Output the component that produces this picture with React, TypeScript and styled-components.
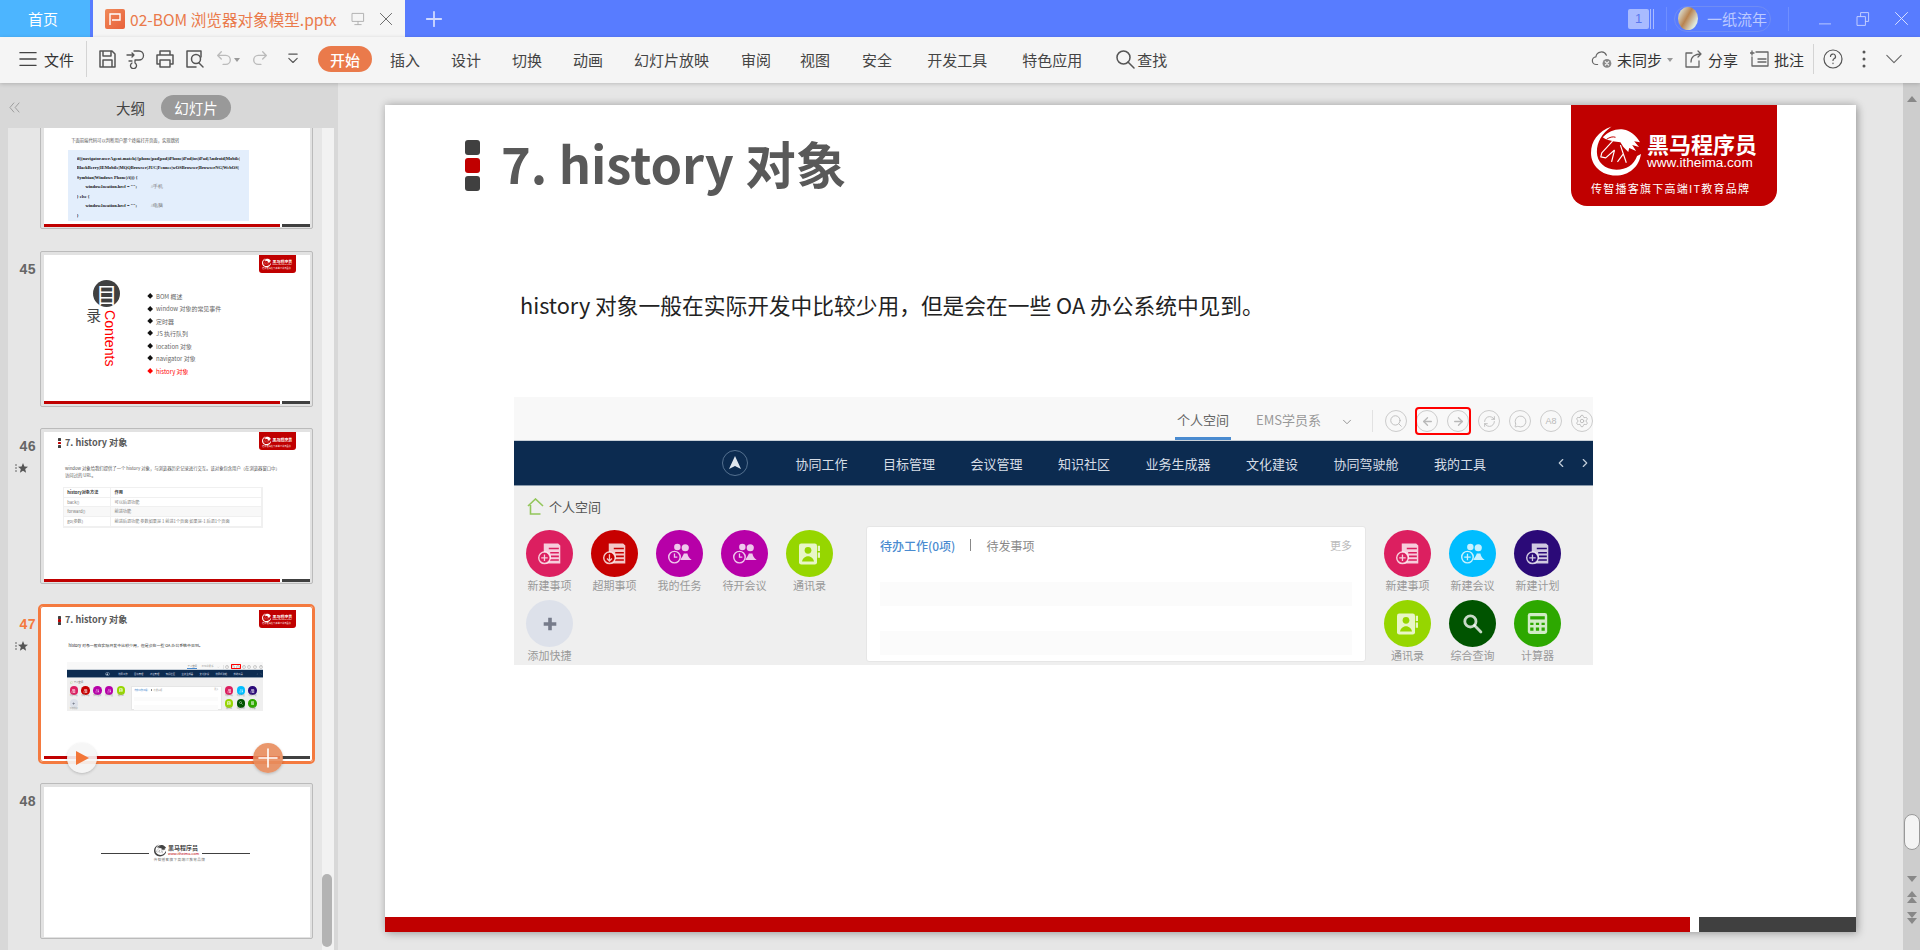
import React from 'react';
import styled, { createGlobalStyle } from 'styled-components';
import { ArrowLeft, ArrowRight, ChevronDown, ChevronLeft, ChevronRight, MessageCircle, RefreshCw, Search, Settings } from 'lucide-react';

const CJK = '"Noto Sans CJK SC", "Noto Sans", sans-serif';

const GlobalStyle = createGlobalStyle`
  html, body { margin: 0; padding: 0; background: #e6e6e6; overflow: hidden; }
  body { font-family: ${CJK}; }
  * { box-sizing: border-box; }
`;

const Page = styled.div`
  width: 1920px;
  height: 950px;
  display: flex;
  flex-direction: column;
  overflow: hidden;
`;

/* ---------- title bar ---------- */
const TitleBar = styled.div`
  height: 37px;
  flex: none;
  display: flex;
  align-items: stretch;
  background: #587cff;
  color: #fff;
`;
const HomeTab = styled.div`
  width: 90px;
  margin-right: 3px;
  background: #4cb5ff;
  display: flex;
  align-items: center;
  justify-content: center;
  font-size: 15px;
  padding-right: 4px;
`;
const DocTab = styled.div`
  width: 312px;
  background: #f5f5f5;
  display: flex;
  align-items: center;
  padding-left: 12px;
  color: #ea7a4b;
  font-size: 15.6px;
  white-space: nowrap;
`;
const DocIcon = styled.div`
  width: 20px;
  height: 20px;
  background: linear-gradient(135deg, #f08a5a, #e8603a);
  border-radius: 2px;
  margin-right: 5px;
  flex: none;
  display: flex;
  align-items: center;
  justify-content: center;
`;
const TabActions = styled.div`
  display: flex;
  align-items: center;
  gap: 12px;
  margin-left: 13px;
`;
const NewTab = styled.div`
  margin-left: 20px;
  display: flex;
  align-items: center;
`;
const TitleRight = styled.div`
  margin-left: auto;
  display: flex;
  align-items: center;
`;
const CountBadge = styled.div`
  width: 21px;
  height: 20px;
  background: #a9bbff;
  border-radius: 2px;
  color: #5a78ee;
  font: 13px "Liberation Sans", sans-serif;
  display: flex;
  align-items: center;
  justify-content: center;
`;
const CountLines = styled.div`
  width: 4px;
  height: 20px;
  margin-left: 1px;
  border-left: 1px solid #a9bbff;
  border-right: 1px solid #a9bbff;
`;
const TitleSep = styled.div<{ $left: number; $right: number }>`
  width: 1px;
  height: 24px;
  background: #6f8fff;
  margin: 0 ${(p) => p.$right}px 0 ${(p) => p.$left}px;
`;
const UserPill = styled.div`
  width: 97px;
  height: 26px;
  border: 1px solid #6f8cf5;
  border-radius: 13px;
  display: flex;
  align-items: center;
  padding-left: 3px;
  color: #bcc9ff;
  font-size: 15px;
  white-space: nowrap;
`;
const Avatar = styled.div`
  width: 20px;
  height: 23px;
  border-radius: 50%;
  background: linear-gradient(120deg, #d8d6c4 15%, #b8834f 45%, #dfe7dc 80%);
  margin-right: 9px;
  flex: none;
`;
const WinButtons = styled.div`
  display: flex;
  align-items: center;
  gap: 23px;
  margin: 0 11px 0 29px;
`;

/* ---------- ribbon toolbar ---------- */
const Toolbar = styled.div`
  height: 46px;
  flex: none;
  display: flex;
  align-items: center;
  padding-bottom: 2px;
  background: #f5f5f5;
  color: #444;
  font-size: 15px;
  position: relative;
  z-index: 2;
  box-shadow: 0 1px 4px rgba(0, 0, 0, 0.18);
  white-space: nowrap;
`;
const FileMenu = styled.div`
  display: flex;
  align-items: center;
  gap: 7px;
  margin-left: 19px;
  color: #333;
  width: 67px;
`;
const ToolSep = styled.div`
  width: 1px;
  height: 36px;
  background: #d4d4d4;
`;
const QuickIcons = styled.div`
  display: flex;
  align-items: center;
  margin-left: 10px;
  width: 221px;
`;
const QuickIcon = styled.span<{ $w: number }>`
  width: ${(p) => p.$w}px;
  flex: none;
  display: flex;
  align-items: center;
`;
const StartPill = styled.div`
  width: 54px;
  height: 26px;
  border-radius: 13px;
  background: #ea7a4b;
  color: #fff;
  display: flex;
  align-items: center;
  justify-content: center;
  font-weight: 500;
`;
const RibbonTab = styled.div<{ $gap?: number }>`
  margin-left: ${(p) => p.$gap ?? 31}px;
  display: flex;
  align-items: center;
  gap: 2px;
`;
const ToolRight = styled.div`
  margin-left: auto;
  display: flex;
  align-items: center;
  color: #333;
  padding-right: 17px;
`;
const ToolAction = styled.div<{ $gap?: number }>`
  display: flex;
  align-items: center;
  gap: 4px;
  margin-left: ${(p) => p.$gap ?? 0}px;
`;
const MiniCaret = styled.span`
  width: 0;
  height: 0;
  border: 3.5px solid transparent;
  border-top: 4px solid #999;
  margin: 4px 0 0 1px;
`;
const HelpSep = styled(ToolSep)`
  height: 30px;
  margin: 0 9px;
`;

/* ---------- workspace ---------- */
const Workspace = styled.div`
  flex: 1;
  display: flex;
  min-height: 0;
`;
const Sidebar = styled.div`
  width: 338px;
  flex: none;
  background: #d8d8d8;
  display: flex;
  flex-direction: column;
`;
const SideHeader = styled.div`
  height: 45px;
  flex: none;
  display: flex;
  align-items: center;
  padding: 4px 0 0 8px;
  color: #444;
  font-size: 14.5px;
`;
const OutlineTab = styled.span`
  margin-left: 95px;
`;
const SlidesPill = styled.span`
  width: 70px;
  height: 25px;
  margin-left: 16px;
  border-radius: 13px;
  background: #999;
  color: #fff;
  display: flex;
  align-items: center;
  justify-content: center;
`;
const SideBody = styled.div`
  flex: 1;
  display: flex;
  min-height: 0;
  margin: 0 4px 0 8px;
`;
const ThumbList = styled.div`
  flex: 1;
  background: #e6e6e6;
  overflow: hidden;
  display: flex;
  flex-direction: column;
  gap: 21.5px;
`;
const SideTrack = styled.div`
  width: 12px;
  flex: none;
  background: #f2f2f2;
  display: flex;
  flex-direction: column;
  justify-content: flex-end;
`;
const SideThumb = styled.div`
  width: 10px;
  height: 73px;
  margin-bottom: 3px;
  border-radius: 5px;
  background: #b3b3b3;
`;
const ThumbRow = styled.div<{ $first?: boolean }>`
  display: flex;
  flex: none;
  margin-top: ${(p) => (p.$first ? '-55px' : '0')};
`;
const ThumbMeta = styled.div`
  width: 32px;
  flex: none;
  display: flex;
  flex-direction: column;
  align-items: flex-end;
  padding: 11px 4px 0 0;
  gap: 8px;
`;
const ThumbNo = styled.div<{ $active?: boolean }>`
  font: bold 14px/16px "Liberation Mono", monospace;
  color: ${(p) => (p.$active ? '#f47a3f' : '#666')};
`;
const StarMark = styled.svg`
  align-self: flex-start;
  margin-left: 7px;
`;
const ThumbFrame = styled.div<{ $active?: boolean }>`
  width: 273px;
  height: 156px;
  flex: none;
  position: relative;
  padding: 3px 2px 1px 3px;
  background: #e2e2e2;
  border: 1px solid ${(p) => (p.$active ? '#f47a3f' : '#bbb')};
  border-radius: 2px;
  outline: ${(p) => (p.$active ? '2px solid #f47a3f' : 'none')};
  ${(p) => (p.$active ? 'background: #fff; border-radius: 3px;' : '')}
`;
const ThumbZoom = styled.div`
  zoom: 0.181;
`;
const RoundOverlay = styled.div<{ $side: 'left' | 'right' }>`
  position: absolute;
  bottom: -12px;
  ${(p) => (p.$side === 'left' ? 'left: 26px;' : 'right: 29px;')}
  width: 30px;
  height: 30px;
  border-radius: 50%;
  background: ${(p) => (p.$side === 'left' ? 'rgba(245, 245, 245, 0.9)' : 'rgba(232, 140, 92, 0.9)')};
  box-shadow: 0 1px 3px rgba(0, 0, 0, 0.2);
  display: flex;
  align-items: center;
  justify-content: center;
`;

const Stage = styled.div`
  flex: 1;
  background: #e6e6e6;
  padding: 22px 47px 0;
  min-width: 0;
`;
const VScroll = styled.div`
  width: 17px;
  flex: none;
  background: #cdcdcd;
  display: flex;
  flex-direction: column;
  align-items: center;
`;
const Tri = styled.span<{ $dir: 'up' | 'down'; $top: number }>`
  width: 0;
  height: 0;
  flex: none;
  margin-top: ${(p) => p.$top}px;
  border-left: 5px solid transparent;
  border-right: 5px solid transparent;
  ${(p) => (p.$dir === 'up' ? 'border-bottom: 6px solid #888;' : 'border-top: 6px solid #888;')}
`;
const VThumb = styled.div`
  width: 16px;
  height: 36px;
  flex: none;
  margin-top: 712px;
  background: #f4f4f4;
  border: 1px solid #999;
  border-radius: 8px;
`;

/* ---------- slide ---------- */
const SlideSheet = styled.div<{ $shadow?: boolean }>`
  width: 1471px;
  height: 827px;
  background: #fff;
  position: relative;
  display: flex;
  flex-direction: column;
  ${(p) => (p.$shadow ? 'box-shadow: 2px 2px 8px rgba(0, 0, 0, 0.25), 0 -2px 8px rgba(0, 0, 0, 0.12);' : '')}
`;
const SlideHead = styled.div`
  height: 96px;
  flex: none;
  display: flex;
  align-items: flex-start;
  padding: 35px 0 0 80px;
  gap: 21px;
`;
const Bullets = styled.div`
  display: flex;
  flex-direction: column;
  gap: 3px;
`;
const Bullet = styled.div<{ $red?: boolean }>`
  width: 15px;
  height: 15px;
  border-radius: 3px;
  background: ${(p) => (p.$red ? '#c00000' : '#404040')};
`;
const SlideTitle = styled.div`
  font-size: 50.5px;
  font-weight: 700;
  line-height: 50px;
  margin-top: -3px;
  color: #595959;
  white-space: nowrap;
`;
const SlideFoot = styled.div`
  margin-top: auto;
  height: 15px;
  flex: none;
  display: flex;
`;
const FootRed = styled.div`
  width: 1305px;
  background: #c00000;
`;
const FootDark = styled.div`
  width: 157px;
  margin-left: 9px;
  background: #404040;
`;
const Brand = styled.div`
  position: absolute;
  top: 0;
  left: 1186px;
  width: 206px;
  height: 101px;
  background: #c00000;
  border-radius: 0 0 16px 16px;
  color: #fff;
  padding: 20px 20px 0;
`;
const BrandTop = styled.div`
  display: flex;
  align-items: center;
  gap: 5px;
`;
const BrandName = styled.div`
  font-size: 22px;
  line-height: 24px;
  font-weight: 700;
  white-space: nowrap;
`;
const BrandUrl = styled.div`
  font: 13.6px/16px "Liberation Sans", sans-serif;
  white-space: nowrap;
`;
const BrandLine = styled.div`
  font-size: 11px;
  line-height: 14px;
  letter-spacing: 1.25px;
  margin-top: 4px;
  white-space: nowrap;
`;
const Lead = styled.div`
  margin: 83px 0 0 135px;
  height: 42px;
  font-size: 21.72px;
  line-height: 42px;
  color: #222;
  white-space: nowrap;
`;

/* ---------- screenshot inside the slide ---------- */
const Shot = styled.div`
  width: 1079px;
  height: 268px;
  margin: 71px 0 0 129px;
  background: #efefef;
  overflow: hidden;
  flex: none;
`;
const ShotTop = styled.div`
  height: 44px;
  background: #f8f8f8;
  display: flex;
  justify-content: flex-end;
  font-size: 13px;
  color: #666;
  border-bottom: 1px solid #c8d0d8;
`;
const ShotTab = styled.div<{ $on?: boolean }>`
  display: flex;
  align-items: center;
  padding: ${(p) => (p.$on ? '0 2px' : '0')};
  color: ${(p) => (p.$on ? '#666' : '#999')};
  margin-right: ${(p) => (p.$on ? 25 : 19)}px;
  padding-top: 4px;
  border-bottom: 3px solid ${(p) => (p.$on ? '#4a8bd0' : 'transparent')};
  white-space: nowrap;
`;
const ShotChevron = styled.div`
  display: flex;
  padding-top: 18px;
`;
const ShotDivider = styled.div`
  width: 1px;
  height: 22px;
  background: #e2e2e2;
  margin: 13px 12px 0 18px;
`;
const RoundRow = styled.div`
  display: flex;
  gap: 9px;
  padding-top: 13px;
`;
const RoundBtn = styled.div`
  width: 22px;
  height: 22px;
  border: 1px solid #ccc;
  border-radius: 50%;
  flex: none;
  display: flex;
  align-items: center;
  justify-content: center;
  color: #b8b8b8;
  font: 9px "Liberation Sans", sans-serif;
`;
const RedGroup = styled.div`
  display: flex;
  gap: 9px;
  position: relative;
  height: 22px;
  &::after {
    content: '';
    position: absolute;
    inset: -3px -2px -3px -1px;
    border: 2px solid #f00;
    border-radius: 4px;
  }
`;
const ShotNav = styled.div`
  height: 45px;
  background: #0c2b50;
  border-bottom: 1px solid #8a9aab;
  display: flex;
  align-items: center;
  padding-left: 208px;
  font-size: 13px;
  color: #d6dde6;
  gap: 35.5px;
  white-space: nowrap;
`;
const NavMark = styled.div`
  width: 26px;
  height: 26px;
  margin-right: 12px;
  border: 1px solid #54708f;
  border-radius: 50%;
  display: flex;
  align-items: center;
  justify-content: center;
`;
const NavArrows = styled.div`
  margin-left: auto;
  display: flex;
  gap: 10px;
  margin-right: 1px;
  color: #c3cdd9;
`;
const ShotBody = styled.div`
  display: flex;
  height: 179px;
`;
const ShotLeft = styled.div`
  width: 352px;
  flex: none;
  padding: 12px 0 0 3px;
`;
const Crumb = styled.div`
  display: flex;
  align-items: center;
  gap: 5px;
  height: 17px;
  margin: 0 0 15px 10px;
  font-size: 13px;
  color: #555;
`;
const IconGrid = styled.div<{ $cols: number }>`
  display: grid;
  grid-template-columns: repeat(${(p) => p.$cols}, 65px);
  row-gap: 7px;
`;
const IconCell = styled.div`
  display: flex;
  flex-direction: column;
  align-items: center;
  font-size: 11px;
  line-height: 16px;
  color: #999;
  white-space: nowrap;
`;
const IconDisc = styled.div<{ $bg: string }>`
  width: 47px;
  height: 47px;
  border-radius: 50%;
  background: ${(p) => p.$bg};
  display: flex;
  align-items: center;
  justify-content: center;
`;
const TodoCard = styled.div`
  width: 500px;
  height: 136px;
  flex: none;
  margin-top: 40px;
  background: #fff;
  border-radius: 3px;
  border: 1px solid #e6e6e6;
  padding: 9px 13px 0;
`;
const TodoHead = styled.div`
  display: flex;
  align-items: center;
  height: 18px;
  font-size: 12px;
  color: #888;
`;
const TodoActive = styled.span`
  color: #4a8bd0;
  font-weight: 500;
`;
const TodoSep = styled.span`
  width: 1px;
  height: 12px;
  background: #888;
  margin: 0 15px;
`;
const TodoMore = styled.span`
  margin-left: auto;
  font-size: 11px;
  color: #bbb;
`;
const TodoRow = styled.div<{ $top: number }>`
  height: 24px;
  margin-top: ${(p) => p.$top}px;
  background: #fbfbfb;
`;
const ShotRight = styled.div`
  padding: 44px 0 0 9px;
`;

/* ---------- other thumbnails ---------- */
const SlideNote = styled.div`
  font-size: 24px;
  line-height: 40px;
  color: #555;
  white-space: nowrap;
`;
const NoteOffset = styled.div<{ $top: number; $left: number; $w?: number }>`
  margin: ${(p) => p.$top}px 0 0 ${(p) => p.$left}px;
  ${(p) => (p.$w ? `width: ${p.$w}px;` : '')}
`;
const CodeBlock = styled.div`
  margin: 36px 0 0 133px;
  width: 1000px;
  height: 392px;
  padding: 20px 48px;
  background: #e3eefc;
  font: bold 25px/52px "Liberation Serif", serif;
  color: #111;
`;
const CodeLine = styled.div<{ $indent?: boolean }>`
  padding-left: ${(p) => (p.$indent ? 48 : 0)}px;
  white-space: nowrap;
  overflow: hidden;
`;
const CodeNote = styled.span`
  font-weight: 400;
  color: #777;
  margin-left: 70px;
`;
const TableGrid = styled.div`
  margin: 40px 0 0 105px;
  width: 1105px;
  display: grid;
  grid-template-columns: 261px 1fr;
  border: 3px solid #f0f0f0;
  font-size: 23px;
  line-height: 49px;
  color: #777;
`;
const TableCell = styled.div<{ $head?: boolean; $shade?: boolean }>`
  padding-left: 18px;
  border-bottom: 3px solid #f0f0f0;
  border-right: 3px solid #f0f0f0;
  white-space: nowrap;
  ${(p) => (p.$head ? 'font-weight: 700; color: #333;' : '')}
  ${(p) => (p.$shade ? 'background: #f8f8f8;' : '')}
`;
const TocBody = styled.div`
  display: flex;
  padding: 141px 0 0 140px;
`;
const TocSide = styled.div`
  width: 344px;
  flex: none;
  display: flex;
  flex-direction: column;
  align-items: flex-end;
  padding-right: 62px;
`;
const TocDisc = styled.div`
  width: 150px;
  height: 150px;
  border-radius: 50%;
  background: #404040;
  color: #fff;
  font-size: 118px;
  line-height: 150px;
  text-align: center;
`;
const TocVertical = styled.div`
  display: flex;
  justify-content: flex-end;
  gap: 10px;
  margin-right: 16px;
  color: #333;
`;
const TocWord = styled.div`
  font-size: 82px;
  line-height: 90px;
  color: #444;
`;
const TocEn = styled.div`
  writing-mode: vertical-rl;
  font: 78px/80px "Liberation Sans", sans-serif;
  color: #f00;
  margin-top: 18px;
`;
const TocList = styled.div`
  display: flex;
  flex-direction: column;
  margin-left: 89px;
  padding-top: 55px;
`;
const TocItem = styled.div<{ $red?: boolean }>`
  height: 69px;
  display: flex;
  align-items: center;
  gap: 22px;
  font-size: 33px;
  color: ${(p) => (p.$red ? '#f00' : '#666')};
  white-space: nowrap;
  &::before {
    content: '';
    width: 24px;
    height: 24px;
    transform: rotate(45deg);
    background: ${(p) => (p.$red ? '#f00' : '#111')};
  }
`;
const EndRow = styled.div`
  display: flex;
  align-items: center;
  margin: 315px 0 0 315px;
`;
const EndRule = styled.div`
  width: 265px;
  height: 8px;
  background: #404040;
`;
const EndLogo = styled.div`
  width: 293px;
  flex: none;
  padding-left: 26px;
  color: #444;
`;
const EndTop = styled.div`
  display: flex;
  align-items: center;
  gap: 10px;
`;
const EndName = styled.div`
  font-size: 33px;
  line-height: 44px;
  font-weight: 700;
  white-space: nowrap;
`;
const EndUrl = styled.div`
  font: 22px/26px "Liberation Sans", sans-serif;
  color: #c00000;
  white-space: nowrap;
`;
const EndLine = styled.div`
  font-size: 20px;
  line-height: 34px;
  letter-spacing: 2px;
  color: #777;
  white-space: nowrap;
`;

/* ---------- small drawings ---------- */
const Stroke = ({ size = 20, color = '#555', sw = 1.5, children }: { size?: number; color?: string; sw?: number; children: React.ReactNode }) => (
  <svg width={size} height={size} viewBox="0 0 20 20" fill="none" stroke={color} strokeWidth={sw} strokeLinecap="round" strokeLinejoin="round">
    {children}
  </svg>
);

// ring, spiky mane and thin head lines of the brand logo
const HorseMark = ({ size = 52, color = '#fff', line = '#c00000' }: { size?: number; color?: string; line?: string }) => (
  <svg width={size} height={size} viewBox="0 0 52 52" fill="none">
    <path d="M21 1C7 6 0 16 0 28c0 13 11 23 25 23 14 0 24-9 26-22l-4 2c-3 9-11 14-21 14C14 45 6 37 6 27 6 17 11 8 21 1z" fill={color} />
    <path d="M12 12c6-6 13-9 21-8 7 1 13 6 17 13l-6-1 5 6-7-2 4 6-7-3-1 4-5-5-3-5-8-1c-3-1-6-1-10-4z" fill={color} />
    <path d="M22 16L11 28l-1 4 5 1 9-8M24 25l-3 12M30 20l3 9 3 9M33 29l-6 8" stroke={color} strokeWidth="1.2" strokeLinejoin="round" />
    <path d="M16 14c3-2 6-3 9-2" stroke={line} strokeWidth="1" />
  </svg>
);

const DiscGlyph = ({ kind, bg, sign = 'plus' }: { kind: string; bg: string; sign?: string }) => {
  const c = 'rgba(255,255,255,0.78)';
  if (kind === 'list') {
    return (
      <svg width="25" height="23" viewBox="0 0 34 32" fill="none">
        <path d="M9 2h20l3 3v25H13V14H9z" fill={c} />
        <path d="M16 9h14M18 15h12M19 20h11M17 25h13" stroke={bg} strokeWidth="2.2" />
        <circle cx="10" cy="22" r="8" fill={bg} stroke={c} strokeWidth="2" />
        {sign === 'down' ? <path d="M10 17v9M6.5 23l3.5 3.5 3.5-3.5" stroke={c} strokeWidth="1.8" /> : <path d="M10 17.5v9M5.5 22h9" stroke={c} strokeWidth="1.8" />}
      </svg>
    );
  }
  if (kind === 'people') {
    return (
      <svg width="25" height="23" viewBox="0 0 34 32" fill="none">
        <circle cx="14" cy="7" r="4.5" fill={c} />
        <circle cx="25" cy="8" r="5" fill={c} />
        <path d="M18 25c3-5 4-6 5-9h5c1 4 2 6 6 9z" fill={c} />
        <circle cx="10" cy="21" r="8" fill={bg} stroke={c} strokeWidth="2" />
        {sign === 'clock' ? <path d="M10 16v5h4" stroke={c} strokeWidth="1.8" /> : <path d="M10 16.5v9M5.5 21h9" stroke={c} strokeWidth="1.8" />}
      </svg>
    );
  }
  if (kind === 'contact') {
    return (
      <svg width="23" height="24" viewBox="0 0 30 32" fill="none">
        <rect x="1" y="2" width="24" height="28" rx="3" fill={c} />
        <rect x="26" y="5" width="3" height="7" fill={c} />
        <rect x="26" y="14" width="3" height="7" fill={c} />
        <circle cx="13" cy="11" r="4.5" fill={bg} />
        <path d="M5 26c1-5 5-7 8-7s7 2 8 7z" fill={bg} />
      </svg>
    );
  }
  if (kind === 'search') {
    return (
      <svg width="21" height="21" viewBox="0 0 30 30" fill="none" stroke={c} strokeWidth="4">
        <circle cx="12" cy="12" r="8" />
        <path d="M18 18l9 9" strokeLinecap="round" />
      </svg>
    );
  }
  if (kind === 'calc') {
    return (
      <svg width="21" height="23" viewBox="0 0 26 28" fill="none">
        <rect x="1" y="1" width="24" height="26" rx="3" fill={c} />
        <rect x="4" y="5" width="18" height="4" fill={bg} />
        <path d="M4 13h4v3H4zM11 13h4v3h-4zM18 13h4v3h-4zM4 19h4v4H4zM11 19h4v4h-4zM18 19h4v4h-4z" fill={bg} />
      </svg>
    );
  }
  return (
    <svg width="18" height="18" viewBox="0 0 20 20" fill="#767b8a">
      <path d="M8 3h4v5h5v4h-5v5H8v-5H3V8h5z" />
    </svg>
  );
};

const leftIcons = [
  { label: '新建事项', bg: '#dc1f60', kind: 'list' },
  { label: '超期事项', bg: '#c70000', kind: 'list', sign: 'down' },
  { label: '我的任务', bg: '#b700a8', kind: 'people', sign: 'clock' },
  { label: '待开会议', bg: '#b700a8', kind: 'people', sign: 'clock' },
  { label: '通讯录', bg: '#96d600', kind: 'contact' },
  { label: '添加快捷', bg: '#dde1ea', kind: 'add' },
];
const rightIcons = [
  { label: '新建事项', bg: '#dc1f60', kind: 'list' },
  { label: '新建会议', bg: '#00bdff', kind: 'people' },
  { label: '新建计划', bg: '#2b0a78', kind: 'list' },
  { label: '通讯录', bg: '#96d600', kind: 'contact' },
  { label: '综合查询', bg: '#005400', kind: 'search' },
  { label: '计算器', bg: '#2da800', kind: 'calc' },
];
const navItems = ['协同工作', '目标管理', '会议管理', '知识社区', '业务生成器', '文化建设', '协同驾驶舱', '我的工具'];
const ribbon: [string, number?][] = [['插入', 18], ['设计'], ['切换'], ['动画'], ['幻灯片放映'], ['审阅', 32], ['视图', 29], ['安全', 32], ['开发工具', 35], ['特色应用', 35]];
const tocItems = ['BOM 概述', 'window 对象的常见事件', '定时器', 'JS 执行队列', 'location 对象', 'navigator 对象', 'history 对象'];

function Screenshot() {
  return (
    <Shot>
      <ShotTop>
        <ShotTab $on>个人空间</ShotTab>
        <ShotTab>EMS学员系</ShotTab>
        <ShotChevron>
          <ChevronDown size={14} color="#888" strokeWidth={1.5} />
        </ShotChevron>
        <ShotDivider />
        <RoundRow>
          <RoundBtn><Search size={14} strokeWidth={1.5} /></RoundBtn>
          <RedGroup>
            <RoundBtn><ArrowLeft size={13} strokeWidth={2.5} /></RoundBtn>
            <RoundBtn><ArrowRight size={13} strokeWidth={2.5} /></RoundBtn>
          </RedGroup>
          <RoundBtn><RefreshCw size={13} strokeWidth={1.5} /></RoundBtn>
          <RoundBtn><MessageCircle size={13} strokeWidth={1.5} /></RoundBtn>
          <RoundBtn>A8</RoundBtn>
          <RoundBtn><Settings size={14} strokeWidth={1.5} /></RoundBtn>
        </RoundRow>
      </ShotTop>
      <ShotNav>
        <NavMark>
          <svg width="14" height="14" viewBox="0 0 14 14"><path d="M7 0l6 13-6-3-6 3z" fill="#dfe6ee" /></svg>
        </NavMark>
        {navItems.map((item) => (
          <span key={item}>{item}</span>
        ))}
        <NavArrows>
          <ChevronLeft size={14} />
          <ChevronRight size={14} />
        </NavArrows>
      </ShotNav>
      <ShotBody>
        <ShotLeft>
          <Crumb>
            <svg width="17" height="17" viewBox="0 0 17 17" fill="none" stroke="#93c65a" strokeWidth="1.6">
              <path d="M1 8l7.5-7L16 8M3.5 7v9h10" />
            </svg>
            个人空间
          </Crumb>
          <IconGrid $cols={5}>
            {leftIcons.map((icon) => (
              <IconCell key={icon.label}>
                <IconDisc $bg={icon.bg}><DiscGlyph kind={icon.kind} bg={icon.bg} sign={icon.sign} /></IconDisc>
                {icon.label}
              </IconCell>
            ))}
          </IconGrid>
        </ShotLeft>
        <TodoCard>
          <TodoHead>
            <TodoActive>待办工作(0项)</TodoActive>
            <TodoSep />
            待发事项
            <TodoMore>更多</TodoMore>
          </TodoHead>
          <TodoRow $top={28} />
          <TodoRow $top={25} />
        </TodoCard>
        <ShotRight>
          <IconGrid $cols={3}>
            {rightIcons.map((icon) => (
              <IconCell key={icon.label}>
                <IconDisc $bg={icon.bg}><DiscGlyph kind={icon.kind} bg={icon.bg} /></IconDisc>
                {icon.label}
              </IconCell>
            ))}
          </IconGrid>
        </ShotRight>
      </ShotBody>
    </Shot>
  );
}

function BrandBadge() {
  return (
    <Brand>
      <BrandTop>
        <HorseMark />
        <div>
          <BrandName>黑马程序员</BrandName>
          <BrandUrl>www.itheima.com</BrandUrl>
        </div>
      </BrandTop>
      <BrandLine>传智播客旗下高端IT教育品牌</BrandLine>
    </Brand>
  );
}

function SlideHeading() {
  return (
    <SlideHead>
      <Bullets>
        <Bullet />
        <Bullet $red />
        <Bullet />
      </Bullets>
      <SlideTitle>7. history 对象</SlideTitle>
    </SlideHead>
  );
}

function Foot() {
  return (
    <SlideFoot>
      <FootRed />
      <FootDark />
    </SlideFoot>
  );
}

function HistorySlide({ shadow }: { shadow?: boolean }) {
  return (
    <SlideSheet $shadow={shadow}>
      <SlideHeading />
      <Lead>history 对象一般在实际开发中比较少用，但是会在一些 OA 办公系统中见到。</Lead>
      <Screenshot />
      <Foot />
      <BrandBadge />
    </SlideSheet>
  );
}

function CodeSlide() {
  return (
    <SlideSheet>
      <NoteOffset $top={330} $left={150}>
        <SlideNote>下面前端代码可以判断用户那个终端打开页面，实现跳转</SlideNote>
      </NoteOffset>
      <CodeBlock>
        <CodeLine>if((navigator.userAgent.match(/(phone|pad|pod|iPhone|iPod|ios|iPad|Android|Mobile|</CodeLine>
        <CodeLine>BlackBerry|IEMobile|MQQBrowser|JUC|Fennec|wOSBrowser|BrowserNG|WebOS|</CodeLine>
        <CodeLine>Symbian|Windows Phone)/i))) {'{'}</CodeLine>
        <CodeLine $indent>window.location.href = ""; <CodeNote>//手机</CodeNote></CodeLine>
        <CodeLine>{'}'} else {'{'}</CodeLine>
        <CodeLine $indent>window.location.href = ""; <CodeNote>//电脑</CodeNote></CodeLine>
        <CodeLine>{'}'}</CodeLine>
      </CodeBlock>
      <Foot />
    </SlideSheet>
  );
}

function TocSlide() {
  return (
    <SlideSheet>
      <TocBody>
        <TocSide>
          <TocDisc>目</TocDisc>
          <TocVertical>
            <TocWord>录</TocWord>
            <TocEn>Contents</TocEn>
          </TocVertical>
        </TocSide>
        <TocList>
          {tocItems.map((item, i) => (
            <TocItem key={item} $red={i === tocItems.length - 1}>{item}</TocItem>
          ))}
        </TocList>
      </TocBody>
      <Foot />
      <BrandBadge />
    </SlideSheet>
  );
}

function TableSlide() {
  return (
    <SlideSheet>
      <SlideHeading />
      <NoteOffset $top={86} $left={116} $w={1250}>
        <SlideNote>window 对象给我们提供了一个 history 对象，与浏览器历史记录进行交互。该对象包含用户（在浏览器窗口中）</SlideNote>
        <SlideNote>访问过的 URL。</SlideNote>
      </NoteOffset>
      <TableGrid>
        <TableCell $head>history对象方法</TableCell>
        <TableCell $head>作用</TableCell>
        <TableCell>back()</TableCell>
        <TableCell>可以后退功能</TableCell>
        <TableCell $shade>forward()</TableCell>
        <TableCell $shade>前进功能</TableCell>
        <TableCell>go(参数)</TableCell>
        <TableCell>前进后退功能 参数如果是 1 前进1个页面 如果是-1 后退1个页面</TableCell>
      </TableGrid>
      <Foot />
      <BrandBadge />
    </SlideSheet>
  );
}

function EndSlide() {
  return (
    <SlideSheet>
      <EndRow>
        <EndRule />
        <EndLogo>
          <EndTop>
            <HorseMark size={70} color="#444" line="#fff" />
            <div>
              <EndName>黑马程序员</EndName>
              <EndUrl>www.itheima.com</EndUrl>
            </div>
          </EndTop>
          <EndLine>传智播客旗下高端IT教育品牌</EndLine>
        </EndLogo>
        <EndRule />
      </EndRow>
    </SlideSheet>
  );
}

function Thumb({ no, star, active, first, children, overlay }: { no?: number; star?: boolean; active?: boolean; first?: boolean; children: React.ReactNode; overlay?: React.ReactNode }) {
  return (
    <ThumbRow $first={first}>
      <ThumbMeta>
        {no && <ThumbNo $active={active}>{no}</ThumbNo>}
        {star && (
          <StarMark width="13" height="11" viewBox="0 0 13 11">
            <path d="M0 2h2M0 5h2M0 8h2" stroke="#666" strokeWidth="1" />
            <path d="M8 0l1.4 3.5 3.6.3-2.8 2.3.9 3.7L8 7.8 4.9 9.8l.9-3.7L3 3.8l3.6-.3z" fill="#555" />
          </StarMark>
        )}
      </ThumbMeta>
      <ThumbFrame $active={active}>
        <ThumbZoom>{children}</ThumbZoom>
        {overlay}
      </ThumbFrame>
    </ThumbRow>
  );
}

export default function App() {
  return (
    <Page>
      <GlobalStyle />
      <TitleBar>
        <HomeTab>首页</HomeTab>
        <DocTab>
          <DocIcon>
            <svg width="14" height="14" viewBox="0 0 14 14" fill="none" stroke="#fff" strokeWidth="1.4">
              <path d="M2 13V2h10v6H4" />
            </svg>
          </DocIcon>
          02-BOM 浏览器对象模型.pptx
          <TabActions>
            <Stroke size={16} color="#b0b0b0" sw={1.2}>
              <path d="M3 3h14v10H3zM10 13v4M6 17h8" />
            </Stroke>
            <Stroke size={16} color="#666" sw={1.2}>
              <path d="M3 3l14 14M17 3L3 17" />
            </Stroke>
          </TabActions>
        </DocTab>
        <NewTab>
          <Stroke size={18} color="#cfd9ff" sw={2}>
            <path d="M10 2v16M2 10h16" />
          </Stroke>
        </NewTab>
        <TitleRight>
          <CountBadge>1</CountBadge>
          <CountLines />
          <TitleSep $left={12} $right={7} />
          <UserPill>
            <Avatar />
            一纸流年
          </UserPill>
          <TitleSep $left={17} $right={0} />
          <WinButtons>
            <Stroke size={14} color="#c5d1ff" sw={1.3}><path d="M2 17h16" /></Stroke>
            <Stroke size={16} color="#c5d1ff" sw={1.2}><path d="M3 7h10v11H3zM7 7V2h10v11h-4" /></Stroke>
            <Stroke size={15} color="#dbe2ff" sw={1.3}><path d="M2 2l16 16M18 2L2 18" /></Stroke>
          </WinButtons>
        </TitleRight>
      </TitleBar>

      <Toolbar>
        <FileMenu>
          <Stroke size={18} color="#444" sw={1.4}><path d="M1 3h18M1 10h18M1 17h18" /></Stroke>
          文件
        </FileMenu>
        <ToolSep />
        <QuickIcons>
          <QuickIcon $w={29}>
            <Stroke color="#555"><path d="M3 2h12l3 3v13H3zM6 2v5h8V2M6 18v-7h9v7" /></Stroke>
          </QuickIcon>
          <QuickIcon $w={29}>
            <Stroke color="#555" sw={1.3}><path d="M8 2h5a4 4 0 0 1 0 9H9v3a3 3 0 1 1-3 0M1 6h7l-2-2M6 8l2-2M3 12h3" /></Stroke>
          </QuickIcon>
          <QuickIcon $w={30}>
            <Stroke color="#555"><path d="M5 6V2h10v4M5 15H2V6h16v9h-3M5 11h10v7H5z" /></Stroke>
          </QuickIcon>
          <QuickIcon $w={30}>
            <Stroke color="#555"><path d="M16 8V2H2v16h9" /><circle cx="11" cy="10" r="4.5" /><path d="M14 14l4 4" /></Stroke>
          </QuickIcon>
          <QuickIcon $w={36}>
            <Stroke size={18} color="#bbb"><path d="M7 2L3 6l4 4M3 6h9a5 5 0 0 1 0 10H9" /></Stroke>
            <MiniCaret />
          </QuickIcon>
          <QuickIcon $w={35}>
            <Stroke size={18} color="#bbb"><path d="M13 2l4 4-4 4M17 6H8a5 5 0 0 0 0 10h3" /></Stroke>
          </QuickIcon>
          <QuickIcon $w={14}>
            <Stroke size={14} color="#555" sw={1.6}><path d="M4 3h12M4 9l6 6 6-6" /></Stroke>
          </QuickIcon>
        </QuickIcons>
        <StartPill>开始</StartPill>
        {ribbon.map(([name, gap]) => (
          <RibbonTab key={name} $gap={gap}>{name}</RibbonTab>
        ))}
        <RibbonTab $gap={33}>
          <Stroke size={20} color="#555"><circle cx="8.5" cy="8.5" r="6.5" /><path d="M13 13l6 6" /></Stroke>
          查找
        </RibbonTab>
        <ToolRight>
          <ToolAction>
            <Stroke size={22} color="#666" sw={1.1}>
              <path d="M6 15H5a3.5 3.5 0 0 1-.5-7A5 5 0 0 1 14 6.5" />
              <circle cx="14.5" cy="14" r="4" fill="#888" stroke="none" />
              <path d="M13 12.5l3 3M16 12.5l-3 3" stroke="#eee" />
            </Stroke>
            未同步
            <MiniCaret />
          </ToolAction>
          <ToolAction $gap={11}>
            <Stroke size={20} color="#666" sw={1.3}><path d="M8 4H2v14h13v-6M7 13c0-5 4-8 10-8M14 2l3 3-3 3" /></Stroke>
            分享
          </ToolAction>
          <ToolAction $gap={12}>
            <Stroke size={20} color="#666" sw={1.3}><path d="M6 3h12v14H2V8M2 2v4M0 4h4M8 10h8M8 13h8" /></Stroke>
            批注
          </ToolAction>
          <HelpSep />
          <Stroke size={20} color="#555" sw={1.2}>
            <circle cx="10" cy="10" r="9" />
            <path d="M7.5 7.5a2.5 2.5 0 1 1 3.5 2.3c-.7.4-1 .8-1 1.7M10 14v.6" />
          </Stroke>
          <ToolAction $gap={19}>
            <svg width="4" height="18" viewBox="0 0 4 18" fill="#555">
              <circle cx="2" cy="2" r="1.5" /><circle cx="2" cy="9" r="1.5" /><circle cx="2" cy="16" r="1.5" />
            </svg>
          </ToolAction>
          <ToolAction $gap={19}>
            <Stroke size={18} color="#666" sw={1.2}><path d="M2 6l8 8 8-8" /></Stroke>
          </ToolAction>
        </ToolRight>
      </Toolbar>

      <Workspace>
        <Sidebar>
          <SideHeader>
            <Stroke size={13} color="#888" sw={1.1}><path d="M9 3L3 10l6 7M17 3l-6 7 6 7" /></Stroke>
            <OutlineTab>大纲</OutlineTab>
            <SlidesPill>幻灯片</SlidesPill>
          </SideHeader>
          <SideBody>
            <ThumbList>
              <Thumb first><CodeSlide /></Thumb>
              <Thumb no={45}><TocSlide /></Thumb>
              <Thumb no={46} star><TableSlide /></Thumb>
              <Thumb
                no={47}
                star
                active
                overlay={
                  <>
                    <RoundOverlay $side="left">
                      <svg width="13" height="14" viewBox="0 0 13 14"><path d="M0 0l13 7-13 7z" fill="#f27638" /></svg>
                    </RoundOverlay>
                    <RoundOverlay $side="right">
                      <Stroke size={20} color="#fff" sw={1.6}><path d="M10 1v18M1 10h18" /></Stroke>
                    </RoundOverlay>
                  </>
                }
              >
                <HistorySlide />
              </Thumb>
              <Thumb no={48}><EndSlide /></Thumb>
            </ThumbList>
            <SideTrack>
              <SideThumb />
            </SideTrack>
          </SideBody>
        </Sidebar>
        <Stage>
          <HistorySlide shadow />
        </Stage>
        <VScroll>
          <Tri $dir="up" $top={13} />
          <VThumb />
          <Tri $dir="down" $top={26} />
          <Tri $dir="up" $top={9} />
          <Tri $dir="up" $top={0} />
          <Tri $dir="down" $top={9} />
          <Tri $dir="down" $top={0} />
        </VScroll>
      </Workspace>
    </Page>
  );
}
